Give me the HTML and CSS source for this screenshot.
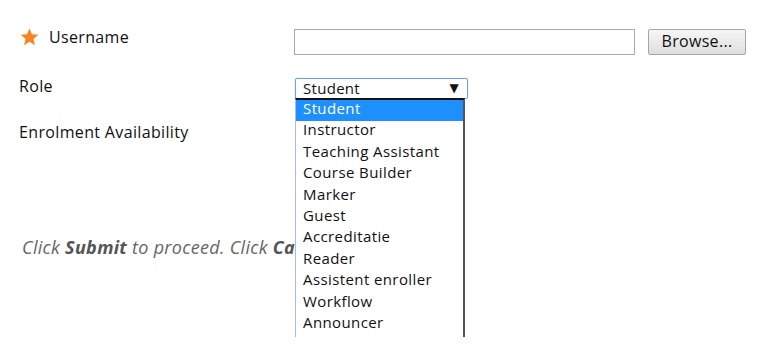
FILE: index.html
```html
<!DOCTYPE html>
<html>
<head>
<meta charset="utf-8">
<link rel="stylesheet" href="styles.css">
</head>
<body>
<div class="page">
  <div class="form">
    <div class="row row-user">
      <div class="label">
        <svg class="star" width="19" height="18" viewBox="0 0 24 23" aria-hidden="true"><path d="M12 0.5l3.1 7.6 8.2 0.6-6.3 5.3 2 8-7-4.4-7 4.4 2-8L0.7 8.7l8.2-0.6z" fill="#f7841f"/></svg>
        <span>Username</span>
      </div>
      <div class="field">
        <div class="textbox"></div>
        <div class="btn">Browse...</div>
      </div>
    </div>
    <div class="row row-role">
      <div class="label">Role</div>
      <div class="field">
        <div class="select-wrap">
          <div class="select"><span>Student</span><span class="arrow">▼</span></div>
          <ul class="listbox">
            <li class="sel">Student</li>
            <li>Instructor</li>
            <li>Teaching Assistant</li>
            <li>Course Builder</li>
            <li>Marker</li>
            <li>Guest</li>
            <li>Accreditatie</li>
            <li>Reader</li>
            <li>Assistent enroller</li>
            <li>Workflow</li>
            <li>Announcer</li>
          </ul>
        </div>
      </div>
    </div>
    <div class="row row-enrol">
      <div class="label">Enrolment Availability</div>
    </div>
  </div>
  <p class="hint">Click <b>Submit</b> to proceed. Click <b>Cancel</b> to quit.</p>
</div>
</body>
</html>
```
FILE: styles.css
```css
html, body {
  margin: 0;
  padding: 0;
  background: #fff;
}
body {
  font-family: "Open Sans", "Noto Sans", sans-serif;
  color: #111;
  overflow: hidden;
  width: 768px;
  height: 349px;
}
.page {
  padding: 29px 0 0 19px;
}
.row {
  display: grid;
  grid-template-columns: 275px 1fr;
  align-items: start;
}
.label {
  font-size: 16px;
  line-height: 20px;
  letter-spacing: 0.35px;
  display: flex;
  align-items: center;
  gap: 10px;
}
.row-user .label {
  margin-left: 1px;
  margin-top: -2px;
}
.star { display: block; }
.field {
  display: flex;
  gap: 13px;
}
.textbox {
  width: 339px;
  height: 24px;
  border: 1px solid #aaa;
  background: #fff;
}
.btn {
  width: 96px;
  height: 24px;
  border: 1px solid #a6a6a6;
  border-radius: 2px;
  background: linear-gradient(#f6f6f6, #dedede);
  font-size: 16px;
  line-height: 23px;
  letter-spacing: 0.3px;
  text-align: center;
  color: #111;
}
.row-role {
  margin-top: 23px;
}
.row-role .label { margin-top: -2px; }
.select-wrap {
  position: relative;
  margin-left: 1px;
}
.select {
  width: 156px;
  height: 19px;
  border: 1px solid #6c9fe6;
  border-radius: 2px;
  padding: 0 8px 0 7px;
  display: flex;
  justify-content: space-between;
  align-items: center;
  font-size: 15px;
  line-height: 19px;
  letter-spacing: 0.3px;
  box-shadow: 0 0 1px #9cc0f5;
}
.arrow {
  font-size: 12px;
  font-family: "DejaVu Sans", sans-serif;
}
.listbox {
  position: absolute;
  top: 20px;
  left: 0;
  margin: 0;
  padding: 0;
  list-style: none;
  width: 167px;
  height: 237px;
  border-top: 2px solid #111;
  border-left: 1px solid #a6bde6;
  border-right: 2px solid #555;
  background: #fff;
  font-size: 15px;
  letter-spacing: 0.4px;
  overflow: hidden;
  z-index: 2;
}
.listbox li {
  height: 21.4px;
  line-height: 17px;
  padding-left: 7px;
  color: #111;
}
.listbox li.sel {
  background: #1e8fff;
  color: #fff;
}
.row-enrol {
  margin-top: 23px;
}
.hint {
  margin: 93px 0 0 3px;
  width: 273px;
  white-space: nowrap;
  overflow: hidden;
  font-size: 18px;
  letter-spacing: 0.3px;
  font-style: italic;
  color: #666;
}
.hint b { color: #555; }
```
